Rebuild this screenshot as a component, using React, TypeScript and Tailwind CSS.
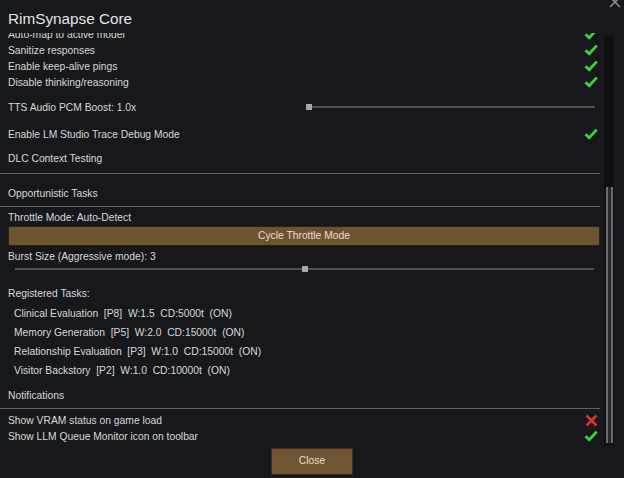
import React from 'react';

const Check: React.FC = () => (
  <svg width="14" height="12" viewBox="0 0 14 12" className="shrink-0">
    <path d="M1.5 6.2 L5.2 9.8 L12.8 1.6" fill="none" stroke="#3fd23a" strokeWidth="2.8" strokeLinejoin="miter" />
  </svg>
);

const Cross: React.FC = () => (
  <svg width="13" height="13" viewBox="0 0 13 13" className="shrink-0">
    <path d="M1.5 1.5 L11.5 11.5 M11.5 1.5 L1.5 11.5" fill="none" stroke="#e2312c" strokeWidth="2.6" />
  </svg>
);

interface RowProps {
  label: string;
  h: string;
  right?: React.ReactNode;
  className?: string;
}

const Row: React.FC<RowProps> = ({ label, h, right, className }) => (
  <div className={`flex items-center justify-between pl-2 pr-[2px] ${h} ${className ?? ''}`}>
    <span className="whitespace-pre pt-[2px]">{label}</span>
    {right}
  </div>
);

const Divider: React.FC<{ className?: string }> = ({ className }) => (
  <div className={`h-px bg-[#5e6062] ${className ?? ''}`} />
);

const tasks = [
  'Clinical Evaluation  [P8]  W:1.5  CD:5000t  (ON)',
  'Memory Generation  [P5]  W:2.0  CD:15000t  (ON)',
  'Relationship Evaluation  [P3]  W:1.0  CD:15000t  (ON)',
  'Visitor Backstory  [P2]  W:1.0  CD:10000t  (ON)',
];

const App: React.FC = () => {
  return (
    <div
      className="relative w-[624px] h-[478px] bg-[#16181c] text-[#d9d9d9] text-[10.3px] leading-none flex flex-col overflow-hidden"
      style={{ fontFamily: '"Liberation Sans", Arial, sans-serif' }}
    >
      <div className="h-[33px] shrink-0 pl-2 pt-[9px] text-[15.3px] leading-[20px] text-[#e4e4e4]">RimSynapse Core</div>
      <div className="absolute right-[2px] top-[-5px] text-[#8c8c8c]">
        <svg width="14" height="14" viewBox="0 0 14 14">
          <path d="M2 2 L12 12 M12 2 L2 12" stroke="currentColor" strokeWidth="1.6" />
        </svg>
      </div>

      <div className="flex h-[413px] shrink-0">
        <div className="w-[600px] overflow-hidden">
          <div className="-mt-[7px] flex flex-col">
            <Row label="Auto-map to active model" h="h-[16px]" right={<Check />} />
            <Row label="Sanitize responses" h="h-[16px]" right={<Check />} />
            <Row label="Enable keep-alive pings" h="h-[16px]" right={<Check />} />
            <Row label="Disable thinking/reasoning" h="h-[16px]" right={<Check />} />
            <div className="flex items-center h-[34px] pl-2">
              <span className="w-[298px] pt-[2px]">TTS Audio PCM Boost: 1.0x</span>
              <div className="relative flex items-center w-[289px] h-[8px]">
                <div className="h-[2px] w-full bg-[#4e5052]" />
                <div className="absolute left-0 w-[6px] h-[6px] bg-[#a8a8a8]" />
              </div>
            </div>
            <Row label="Enable LM Studio Trace Debug Mode" h="h-[20px]" right={<Check />} />
            <Row label="DLC Context Testing" h="h-[29px]" />
            <Divider />
            <Row label="Opportunistic Tasks" h="h-[20px]" className="mt-[9px]" />
            <Divider className="mt-[3px]" />
            <Row label="Throttle Mode: Auto-Detect" h="h-[16px]" className="mt-[2px]" />
            <button className="mt-px ml-2 h-[20px] w-[592px] bg-[#6d5431] border border-[#2b2416] text-[#e6dfd2] text-[10.3px] pt-px">
              Cycle Throttle Mode
            </button>
            <Row label="Burst Size (Aggressive mode): 3" h="h-[16px]" className="mt-[2px]" />
            <div className="flex items-center h-[10px] pl-[15px]">
              <div className="relative flex items-center justify-center w-[579px] h-[8px]">
                <div className="h-[2px] w-full bg-[#4e5052]" />
                <div className="absolute w-[6px] h-[6px] bg-[#a8a8a8]" />
              </div>
            </div>
            <Row label="Registered Tasks:" h="h-[16px]" className="mt-[11px]" />
            <div className="mt-[3px] flex flex-col">
              {tasks.map((t) => (
                <div key={t} className="h-[19px] flex items-center pl-[14px] pt-[2px] whitespace-pre">
                  {t}
                </div>
              ))}
            </div>
            <Row label="Notifications" h="h-[16px]" className="mt-[7px]" />
            <Divider className="mt-[5px]" />
            <Row label="Show VRAM status on game load" h="h-[16px]" className="mt-[3px]" right={<Cross />} />
            <Row label="Show LLM Queue Monitor icon on toolbar" h="h-[16px]" right={<Check />} />
          </div>
        </div>
        <div className="ml-[4px] mt-[2px] mb-px w-[10px] rounded-t-[4px] bg-[#0e0f11] flex flex-col items-center">
          <div className="h-[152px] shrink-0" />
          <div className="flex-1 mb-[2px] w-[7px] bg-[#26282b] border-x-2 border-[#6a6b6d]" />
        </div>
      </div>

      <div className="flex-1 flex justify-center pt-[2px]">
        <button className="w-[82px] h-[27px] bg-[#6f5533] border border-[#3a2e1c] text-[#e6dfd2] text-[10.3px]">Close</button>
      </div>
    </div>
  );
};

export default App;
